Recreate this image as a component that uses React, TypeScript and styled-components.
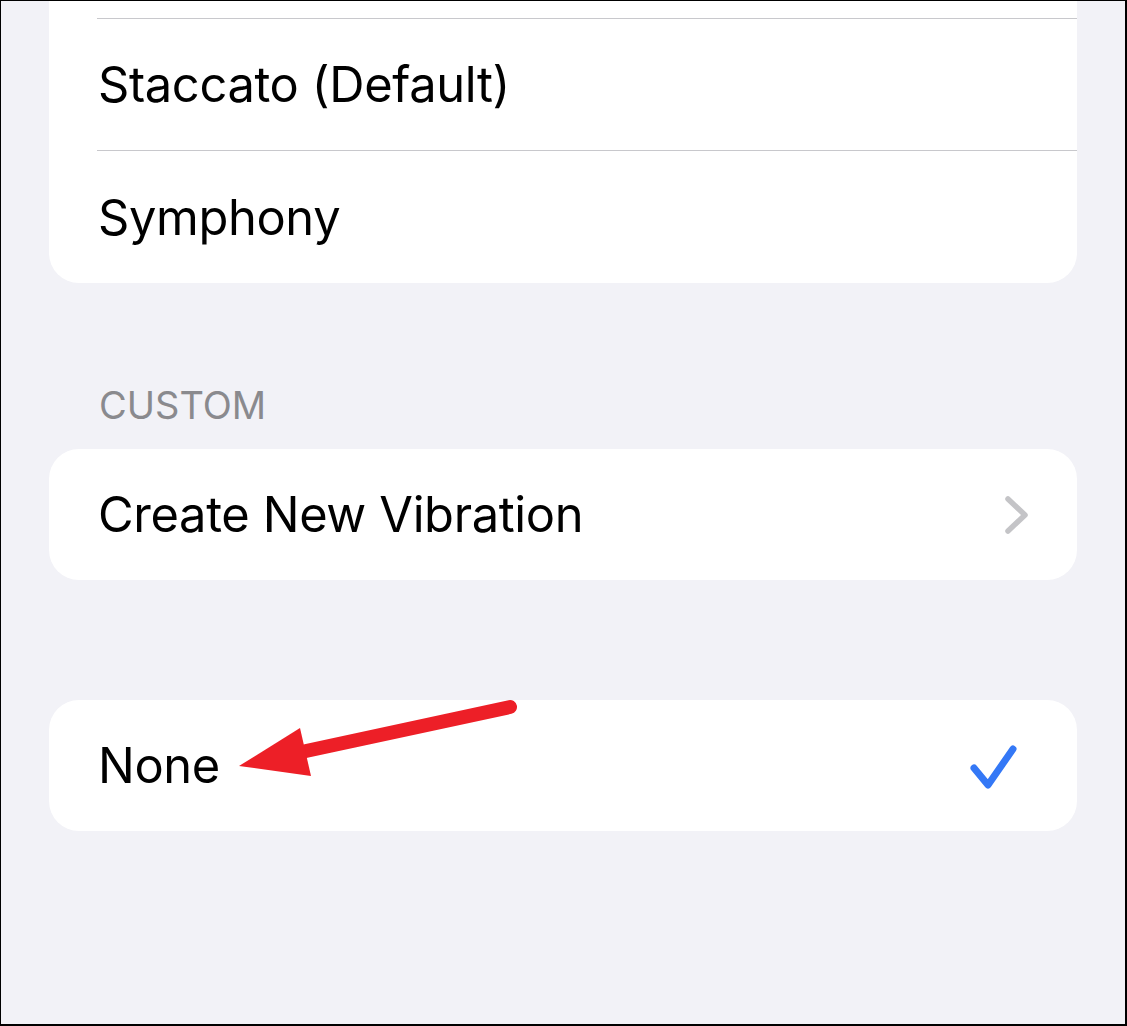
import React from 'react';
import styled, { createGlobalStyle } from 'styled-components';

const GlobalStyle = createGlobalStyle`
  html, body {
    margin: 0;
    padding: 0;
    background: #fff;
  }
  * {
    box-sizing: border-box;
  }
`;

const Frame = styled.div`
  position: relative;
  width: 1127px;
  height: 1026px;
  overflow: hidden;
  background: #f2f2f7;
  border-style: solid;
  border-color: #000;
  border-width: 1px 2px 2px 1px;
  padding: 0 48px;
  font-family: Inter, 'Liberation Sans', sans-serif;
  -webkit-font-smoothing: antialiased;
`;

const Card = styled.div<{ $clipTop?: boolean }>`
  background: #fff;
  border-radius: ${(p) => (p.$clipTop ? '0 0 30px 30px' : '30px')};
  overflow: hidden;
`;

const TopSpacer = styled.div`
  height: 17px;
`;

const Separator = styled.div`
  height: 1px;
  margin-left: 48px;
  background: #c8c8cc;
`;

const Row = styled.div<{ $height?: number }>`
  height: ${(p) => p.$height ?? 131}px;
  display: flex;
  align-items: center;
  justify-content: space-between;
  padding: 0 48px 0 49px;
`;

const Label = styled.span`
  font-size: 48.8px;
  line-height: 1;
  color: #000;
  letter-spacing: -0.35px;
  padding-top: 2px;
`;

const SectionHeader = styled.div`
  margin-top: 103px;
  margin-bottom: 25px;
  padding-left: 50px;
  font-size: 38px;
  line-height: 38px;
  color: #8a8a8e;
  text-transform: uppercase;
`;

const Spacer = styled.div<{ $h: number }>`
  height: ${(p) => p.$h}px;
`;

const Overlay = styled.svg`
  position: absolute;
  top: -1px;
  left: -1px;
  width: 1127px;
  height: 1026px;
  pointer-events: none;
`;

const CheckIcon = styled.svg`
  margin-right: 11px;
  margin-top: 4px;
`;

const Chevron = () => (
  <svg width="24" height="38" viewBox="0 0 24 38">
    <path
      d="M3 3 L20 19 L3 35"
      fill="none"
      stroke="#c4c4c7"
      strokeWidth="5.5"
      strokeLinecap="round"
      strokeLinejoin="round"
    />
  </svg>
);

const Check = () => (
  <CheckIcon width="48" height="46" viewBox="0 0 48 46">
    <path
      d="M4 23 L18 40 L43 4"
      fill="none"
      stroke="#3478f6"
      strokeWidth="7"
      strokeLinecap="round"
      strokeLinejoin="round"
    />
  </CheckIcon>
);

export default function App() {
  return (
    <>
      <GlobalStyle />
      <Frame>
        <Card $clipTop>
          <TopSpacer />
          <Separator />
          <Row>
            <Label>Staccato (Default)</Label>
          </Row>
          <Separator />
          <Row $height={132}>
            <Label>Symphony</Label>
          </Row>
        </Card>

        <SectionHeader>Custom</SectionHeader>
        <Card>
          <Row>
            <Label>Create New Vibration</Label>
            <Chevron />
          </Row>
        </Card>

        <Spacer $h={120} />
        <Card>
          <Row>
            <Label>None</Label>
            <Check />
          </Row>
        </Card>

        <Overlay viewBox="0 0 1127 1026">
          <line
            x1="306"
            y1="751"
            x2="510"
            y2="707"
            stroke="#ed1f27"
            strokeWidth="14"
            strokeLinecap="round"
          />
          <polygon points="239,766 300,728 311,776" fill="#ed1f27" />
        </Overlay>
      </Frame>
    </>
  );
}
